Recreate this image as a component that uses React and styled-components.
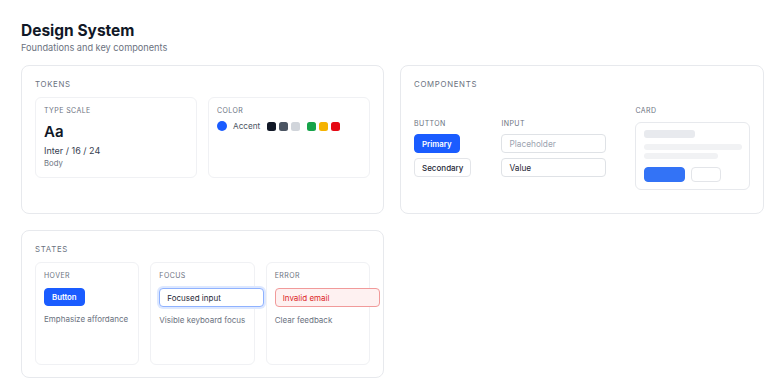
import React from "react";
import styled, { createGlobalStyle } from "styled-components";

const Global = createGlobalStyle`
  html, body { margin: 0; padding: 0; background: #ffffff; }
  body { font-family: Inter, "Noto Sans", sans-serif; color: #111827; }
  * { box-sizing: border-box; }
`;

const Page = styled.div`
  padding: 21px 20px 0 21px;
  width: 784px;
  height: 392px;
  overflow: hidden;
`;

const Title = styled.h1`
  margin: 0;
  font-size: 15.5px;
  line-height: 20px;
  font-weight: 700;
  color: #111827;
`;

const Subtitle = styled.p`
  margin: 1px 0 0;
  font-size: 9.2px;
  line-height: 12px;
  color: #6b7280;
`;

const Grid = styled.div`
  margin-top: 11px;
  display: grid;
  grid-template-columns: 363px 364px;
  grid-template-rows: 149px 148px;
  gap: 16px;
`;

const Card = styled.section`
  border: 1px solid #e7e9ed;
  border-radius: 8px;
  padding: 12px 13px;
  display: flex;
  flex-direction: column;
`;

const CardLabel = styled.div`
  font-size: 7.8px;
  line-height: 12px;
  letter-spacing: 0.09em;
  text-transform: uppercase;
  color: #6b7280;
`;

const SubRow = styled.div`
  margin-top: 7px;
  display: grid;
  grid-template-columns: ${(p) => p.$cols};
  gap: 11px;
  align-items: stretch;
`;

const SubCard = styled.div`
  min-width: 0;
  border: 1px solid #f0f1f4;
  border-radius: 6px;
  padding: 8px 8px 8px;
  min-height: ${(p) => p.$minH || 0}px;
  display: flex;
  flex-direction: column;
  align-items: flex-start;
`;

const Small = styled.div`
  font-size: 7px;
  line-height: 10px;
  letter-spacing: 0.06em;
  text-transform: uppercase;
  color: #6b7280;
  white-space: nowrap;
  margin-bottom: ${(p) => p.$mb ?? 0}px;
`;

const Big = styled.div`
  font-size: 15px;
  line-height: 18px;
  font-weight: 600;
  color: #111827;
`;

const Meta = styled.div`
  margin-top: 4px;
  font-size: 9px;
  line-height: 12px;
  color: #374151;
`;

const Tiny = styled.div`
  margin-top: 2px;
  font-size: 7.7px;
  line-height: 10px;
  color: #6b7280;
`;

const SwatchRow = styled.div`
  display: flex;
  align-items: center;
`;

const Dot = styled.span`
  width: 10px;
  height: 10px;
  border-radius: 50%;
  background: #1a5cff;
`;

const AccentText = styled.span`
  margin: 0 7px 0 6px;
  font-size: 8.2px;
  color: #4b5563;
`;

const Swatch = styled.span`
  width: 9px;
  height: 9px;
  border-radius: 2.5px;
  background: ${(p) => p.$c};
  margin-right: ${(p) => p.$mr ?? 3}px;
`;

const CompGrid = styled.div`
  margin-top: 16px;
  display: flex;
  align-items: center;
`;

const Col = styled.div`
  display: flex;
  flex-direction: column;
  align-items: flex-start;
  gap: ${(p) => p.$gap ?? 5}px;
  margin-right: ${(p) => p.$mr || 0}px;
`;

const Button = styled.button`
  font-family: inherit;
  height: ${(p) => p.$h || 19}px;
  padding: 0 ${(p) => p.$px || 7}px;
  border-radius: 4px;
  font-size: ${(p) => (p.$primary ? 7.8 : 8)}px;
  font-weight: ${(p) => (p.$primary ? 600 : 500)};
  border: 1px solid ${(p) => (p.$primary ? "#1a5cff" : "#e3e5e9")};
  background: ${(p) => (p.$primary ? "#1a5cff" : "#ffffff")};
  color: ${(p) => (p.$primary ? "#ffffff" : "#1f2937")};
  display: inline-flex;
  align-items: center;
  justify-content: center;
  cursor: pointer;
`;

const Input = styled.div`
  width: 105px;
  height: 19px;
  border-radius: 4px;
  padding: 0 7px;
  font-size: ${(p) => (p.$state ? 8 : 8.3)}px;
  display: flex;
  align-items: center;
  flex-shrink: 0;
  white-space: nowrap;
  border: 1px solid
    ${(p) => (p.$state === "focus" ? "#8fb2ff" : p.$state === "error" ? "#f19a9a" : "#dfe2e6")};
  background: ${(p) => (p.$state === "error" ? "#fef1f1" : "#ffffff")};
  color: ${(p) => (p.$state === "error" ? "#dc2626" : p.$placeholder ? "#9ca3af" : "#1f2937")};
  box-shadow: ${(p) => (p.$state === "focus" ? "0 0 0 2px #dde8ff" : "none")};
`;

const MockCard = styled.div`
  width: 115px;
  border: 1px solid #e7e9ed;
  border-radius: 6px;
  padding: 7px 8px 7px;
  display: flex;
  flex-direction: column;
`;

const Bar = styled.div`
  height: ${(p) => p.$h}px;
  width: ${(p) => p.$w}px;
  border-radius: 3px;
  background: ${(p) => p.$c};
  margin-bottom: ${(p) => p.$mb}px;
`;

const MockActions = styled.div`
  display: flex;
  gap: 6px;
`;

const MockBtn = styled.div`
  width: ${(p) => p.$w}px;
  height: 15px;
  border-radius: 4px;
  background: ${(p) => (p.$fill ? "#3373f6" : "#ffffff")};
  border: 1px solid ${(p) => (p.$fill ? "#3373f6" : "#e3e5e9")};
`;

const Desc = styled.div`
  margin-top: 8px;
  font-size: 8px;
  line-height: 11px;
  color: #6b7280;
  white-space: nowrap;
`;

export default function App() {
  return (
    <>
      <Global />
      <Page>
        <Title>Design System</Title>
        <Subtitle>Foundations and key components</Subtitle>
        <Grid>
          <Card>
            <CardLabel>Tokens</CardLabel>
            <SubRow $cols="minmax(0,1fr) minmax(0,1fr)">
              <SubCard>
                <Small $mb={7}>Type scale</Small>
                <Big>Aa</Big>
                <Meta>Inter / 16 / 24</Meta>
                <Tiny>Body</Tiny>
              </SubCard>
              <SubCard>
                <Small $mb={5}>Color</Small>
                <SwatchRow>
                  <Dot />
                  <AccentText>Accent</AccentText>
                  <Swatch $c="#111827" />
                  <Swatch $c="#4b5563" />
                  <Swatch $c="#d1d5db" $mr={7} />
                  <Swatch $c="#16a34a" />
                  <Swatch $c="#f5b301" />
                  <Swatch $c="#e50914" />
                </SwatchRow>
              </SubCard>
            </SubRow>
          </Card>

          <Card>
            <CardLabel>Components</CardLabel>
            <CompGrid>
              <Col $mr={30}>
                <Small>Button</Small>
                <Button $primary>Primary</Button>
                <Button>Secondary</Button>
              </Col>
              <Col $mr={29}>
                <Small>Input</Small>
                <Input $placeholder>Placeholder</Input>
                <Input>Value</Input>
              </Col>
              <Col $gap={6}>
                <Small>Card</Small>
                <MockCard>
                  <Bar $h={8} $w={51} $c="#e8eaee" $mb={6} />
                  <Bar $h={6} $w={98} $c="#f1f2f4" $mb={3} />
                  <Bar $h={6} $w={74} $c="#f1f2f4" $mb={8} />
                  <MockActions>
                    <MockBtn $fill $w={41} />
                    <MockBtn $w={30} />
                  </MockActions>
                </MockCard>
              </Col>
            </CompGrid>
          </Card>

          <Card>
            <CardLabel>States</CardLabel>
            <SubRow $cols="minmax(0,1fr) minmax(0,1fr) minmax(0,1fr)">
              <SubCard $minH={103}>
                <Small $mb={7}>Hover</Small>
                <Button $primary $h={18}>Button</Button>
                <Desc>Emphasize affordance</Desc>
              </SubCard>
              <SubCard $minH={103}>
                <Small $mb={7}>Focus</Small>
                <Input $state="focus">Focused input</Input>
                <Desc>Visible keyboard focus</Desc>
              </SubCard>
              <SubCard $minH={103}>
                <Small $mb={7}>Error</Small>
                <Input $state="error">Invalid email</Input>
                <Desc>Clear feedback</Desc>
              </SubCard>
            </SubRow>
          </Card>
        </Grid>
      </Page>
    </>
  );
}
